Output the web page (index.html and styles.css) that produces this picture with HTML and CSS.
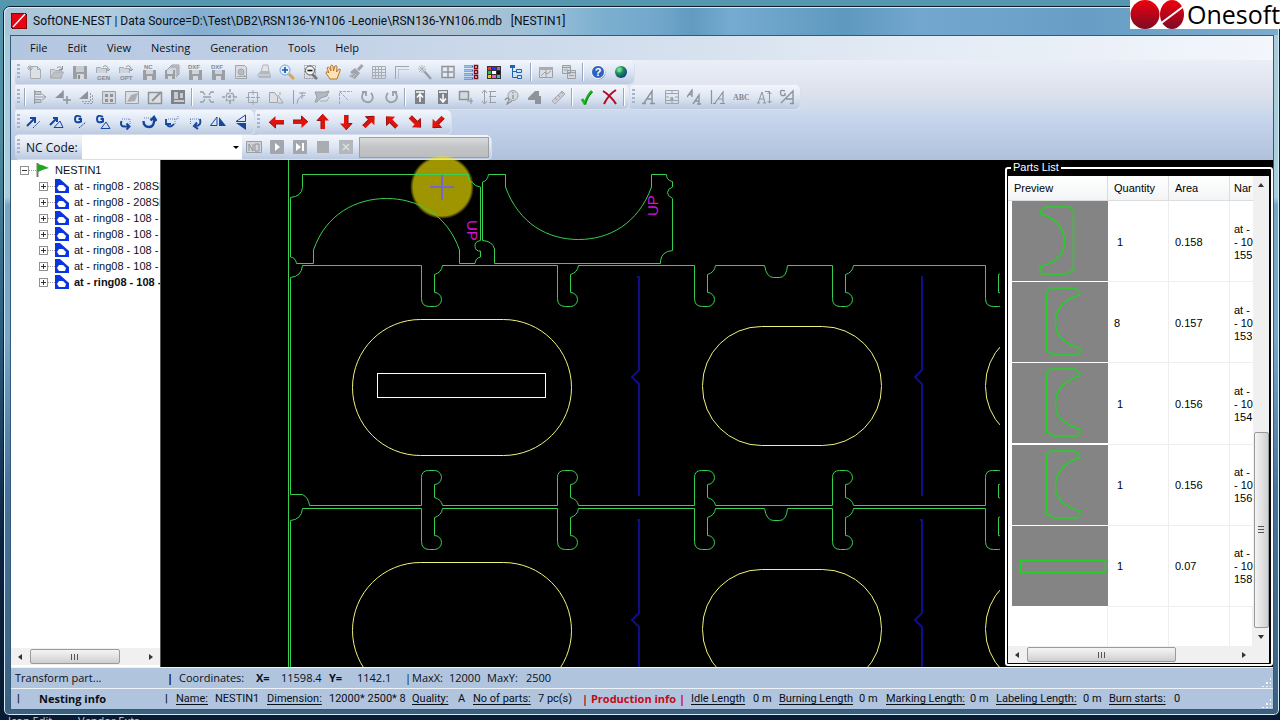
FILE: index.html
```html
<!DOCTYPE html>
<html lang="en">
<head>
<meta charset="utf-8">
<title>SoftONE-NEST</title>
<link rel="stylesheet" href="styles.css">
</head>
<body>
<svg class="defs" width="0" height="0" aria-hidden="true">
  <defs>
    <linearGradient id="red" x1="0" y1="0" x2="0" y2="1"><stop offset="0" stop-color="#f0000c"/><stop offset="1" stop-color="#7d0a26"/></linearGradient>
    <radialGradient id="globe" cx=".35" cy=".3" r=".8"><stop offset="0" stop-color="#7fe0c0"/><stop offset=".45" stop-color="#1b8a58"/><stop offset="1" stop-color="#0c2f86"/></radialGradient>
    <symbol id="new" viewBox="0 0 16 16"><path d="M4.500 2.500h7l3 3v9h-10z" fill="#dde0e4" stroke="#a9adb3"/><path d="M11.500 2.500v3h3M1 4h6M4 1v6M2 2l4 4M6 2L2 6" fill="none" stroke="#a9adb3"/></symbol>
    <symbol id="open" viewBox="0 0 16 16"><path d="M1.500 14V5.500h4l1 1h6V14z" fill="#d0d3d8" stroke="#a9adb3"/><path d="M1.500 14l4-6h9l-3 6z" fill="#bfc3c8" stroke="#a9adb3"/><path d="M8 4q3-3 5 1M13.500 2v3.500H10" fill="none" stroke="#8f949b"/></symbol>
    <symbol id="save" viewBox="0 0 16 16"><path d="M1 2h14v13H1z" fill="#9a9fa6"/><path d="M4 2h8v6H4z" fill="#c9ccd1"/><path d="M5 10h7v5H5z" fill="#d6d9dd"/><path d="M6 11h2v4H6z" fill="#8a8f96"/></symbol>
    <symbol id="gen" viewBox="0 0 16 16"><path d="M1.500 9V3.500h4l1 1h5V9" fill="#d0d3d8" stroke="#a9adb3"/><path d="M8 3q3-3 5 1v3M11 5l2 2 2-2" fill="none" stroke="#8f949b"/><text x="2" y="15.500" class="mini">GEN</text></symbol>
    <symbol id="opt" viewBox="0 0 16 16"><path d="M1.500 9V3.500h4l1 1h5V9" fill="#d0d3d8" stroke="#a9adb3"/><path d="M8 3q3-3 5 1v3M11 5l2 2 2-2" fill="none" stroke="#8f949b"/><text x="2" y="15.500" class="mini">OPT</text></symbol>
    <symbol id="nc" viewBox="0 0 16 16"><text x="3" y="5" class="mini">NC</text><path d="M2 6h13v10H2z" fill="#9a9fa6"/><path d="M5 6h7v4H5z" fill="#d0d3d8"/><path d="M6 12h5v4H6z" fill="#d6d9dd"/></symbol>
    <symbol id="stack" viewBox="0 0 16 16"><path d="M5 4l3-3h7v9l-3 3" fill="#c9ccd1" stroke="#9a9fa6"/><path d="M3 6l3-3h7v8" fill="#d0d3d8" stroke="#9a9fa6"/><path d="M1 6h10v9H1z" fill="#9a9fa6"/><path d="M3 6h6v4H3zM4 12h4v3H4z" fill="#d6d9dd"/></symbol>
    <symbol id="dxf" viewBox="0 0 16 16"><text x="1" y="5" class="mini">DXF</text><path d="M2 6h13v10H2z" fill="#9a9fa6"/><path d="M5 6h7v4H5z" fill="#d0d3d8"/><path d="M6 12h5v4H6z" fill="#d6d9dd"/></symbol>
    <symbol id="page" viewBox="0 0 16 16"><path d="M2.500 1.500h9l2 2v11h-11z" fill="#d9dce0" stroke="#a0a5ab"/><circle cx="8" cy="8" r="3" fill="#b9bdc3" stroke="#a0a5ab"/><path d="M10 10l3 3M4 12.500h8" stroke="#a0a5ab"/></symbol>
    <symbol id="print" viewBox="0 0 16 16"><path d="M5 8l2-7h5l1 7z" fill="#e2e4e8" stroke="#b1b5bb"/><path d="M1 11l4-4h8l2 4v3H3z" fill="#b4b8be"/><path d="M2 11h12" stroke="#d9dce0"/></symbol>
    <symbol id="zin" viewBox="0 0 16 16"><path d="M10 10l5 5" stroke="#d9a55a" stroke-width="3"/><circle cx="6" cy="6" r="5" fill="#e5f1ff" stroke="#7ba3d4"/><path d="M3 6h6M6 3v6" stroke="#1155b5" stroke-width="1.600"/></symbol>
    <symbol id="zout" viewBox="0 0 16 16"><path d="M2.500 14.500V1.500H13.500V14.500z" fill="none" stroke="#999" stroke-dasharray="2 1"/><path d="M10 10l5 5" stroke="#777" stroke-width="2.500"/><circle cx="8" cy="6.500" r="4.500" fill="#f4f4f4" stroke="#555"/><path d="M5.500 6.500h5" stroke="#111" stroke-width="1.600"/></symbol>
    <symbol id="hand" viewBox="0 0 16 16"><path d="M5 15L1 9q0-2 2-1l1 1-2-5q1-2 2.500 0L6 7 5.500 2q1.500-2 2.500 0L8.500 7 10 2q2-1 2 1l-.500 5L14 5q2 0 1 2l-3 8z" fill="#fde2b5" stroke="#b9762a"/></symbol>
    <symbol id="brush" viewBox="0 0 16 16"><path d="M14.500 1L10 6" stroke="#a1a5ab" stroke-width="3"/><path d="M7 4l5 5-5 6-6-3 3-2-2-2z" fill="#a1a5ab"/><path d="M3 12l3-3M5 13l3-3" stroke="#c6cad0"/></symbol>
    <symbol id="grid" viewBox="0 0 16 16"><path d="M1.500 2.500h13v12h-13zM4.500 2v12M7.500 2v12M10.500 2v12M1 5.500h13M1 8.500h13M1 11.500h13" fill="none" stroke="#a9adb3"/></symbol>
    <symbol id="ruler" viewBox="0 0 16 16"><path d="M1.500 15V2.500H15" fill="none" stroke="#a0a5ab"/><path d="M4.500 5.500H15M4.500 5.500V15" fill="none" stroke="#a0a5ab" stroke-dasharray="1 1"/></symbol>
    <symbol id="wand" viewBox="0 0 16 16"><path d="M7 7l7 8" stroke="#9a9fa6" stroke-width="2.500"/><path d="M5 1v8M1 5h8M2 2l6 6M8 2L2 8" stroke="#b1b5bb"/></symbol>
    <symbol id="split" viewBox="0 0 16 16"><path d="M2 2.500h12v11H2zM8 3v10M3 8h10" fill="#e7eaee" stroke="#8e939a" stroke-width="1.500"/></symbol>
    <symbol id="list" viewBox="0 0 16 16"><path d="M1 2.500h9M1 6.500h9M1 10.500h9M1 14.500h9" stroke="#2f5fa8" stroke-width="2"/><path d="M1 2.500h8M1 6.500h8M1 10.500h8M1 14.500h8" stroke="#9fc0ea"/><path d="M11.500 1.500h3v3h-3zM11.500 6.500h3v3h-3zM11.500 11.500h3v3h-3z" fill="#fff" stroke="#7a0d18" stroke-width="1.500"/></symbol>
    <symbol id="pal" viewBox="0 0 16 16"><path d="M1 2h14v13H1z" fill="#333"/><path d="M2 3h3v3H2z" fill="#f33"/><path d="M6 3h4v3H6z" fill="#2b2bff"/><path d="M11 3h3v3h-3z" fill="#b44cff"/><path d="M2 7h3v3H2z" fill="#1cc83c"/><path d="M6 7h4v3H6z" fill="#fff"/><path d="M11 7h3v3h-3z" fill="#111"/><path d="M2 11h3v3H2z" fill="#f5c518"/><path d="M6 11h4v3H6z" fill="#ff4fd0"/><path d="M11 11h3v3h-3z" fill="#22c7d6"/></symbol>
    <symbol id="tree" viewBox="0 0 16 16"><path d="M3.500 3v10.500H8M3.500 7.500H7" fill="none" stroke="#1b63b5"/><path d="M1 1h5v3H1z" fill="#1b63b5"/><path d="M7.500 5.500h5v3h-5zM8.500 11.500h4v3h-4z" fill="#cfe3fb" stroke="#1b63b5"/></symbol>
    <symbol id="win" viewBox="0 0 16 16"><path d="M1.500 3.500h13v10h-13z" fill="#dcdfe3" stroke="#9a9fa6"/><path d="M1 3h14v3H1z" fill="#a9adb3"/><path d="M3 12l4-4 2 2 4-3M8 6v7" fill="none" stroke="#9a9fa6"/></symbol>
    <symbol id="wins" viewBox="0 0 16 16"><path d="M1.500 1.500h8v8h-8zM6.500 6.500h8v8h-8z" fill="#d5d8dd" stroke="#9a9fa6"/><path d="M2 3.500h7M3 6h4M7 8.500h7M8 11.500h5" stroke="#9a9fa6"/></symbol>
    <symbol id="help" viewBox="0 0 16 16"><circle cx="9" cy="9" r="6.500" fill="#8ea6cf"/><circle cx="8" cy="8" r="6.500" fill="#2c62c0" stroke="#fff"/><text x="8" y="12" class="q">?</text></symbol>
    <symbol id="world" viewBox="0 0 16 16"><circle cx="8" cy="8" r="6" fill="url(#globe)"/><path d="M4 5q3-3 5 0l-2 3-2 0z" fill="#6edb8f"/></symbol>
    <symbol id="al" viewBox="0 0 16 16"><path d="M2.500 1v14" stroke="#9a9fa6"/><path d="M3 2.500h6v3H3zM3 10.500h6v3H3z" fill="#c5c9ce" stroke="#9a9fa6"/><path d="M3 8h10M10 5l4 3-4 3" fill="none" stroke="#9a9fa6"/></symbol>
    <symbol id="triplus" viewBox="0 0 16 16"><path d="M0 9l8-7v7z" fill="#8e939a"/><path d="M8 9.500v-8M12 7v8M8 11h8" stroke="#8e939a" stroke-width="1.500"/></symbol>
    <symbol id="tricopy" viewBox="0 0 16 16"><path d="M1 10l9-8v8z" fill="#8e939a"/><path d="M12.500 4v8.500H4M14.500 6v8.500H6" fill="none" stroke="#9a9fa6" stroke-dasharray="2 1"/></symbol>
    <symbol id="cells" viewBox="0 0 16 16"><path d="M1.500 2.500h13v12h-13z" fill="#d5d8dd" stroke="#9a9fa6"/><path d="M4 5h3v3H4zM9 5h3v3H9zM4 10h3v3H4zM9 10h3v3H9z" fill="#8e939a"/></symbol>
    <symbol id="fold" viewBox="0 0 16 16"><path d="M1.500 14.500v-12h13v12z" fill="#dcdfe3" stroke="#9a9fa6"/><path d="M3 13l4-7 7-2-3 8z" fill="#a9adb3"/></symbol>
    <symbol id="edit" viewBox="0 0 16 16"><path d="M1.500 3.500h13v11h-13z" fill="#dcdfe3" stroke="#8e939a" stroke-width="1.500"/><path d="M5 12l9-9" stroke="#8e939a" stroke-width="2"/></symbol>
    <symbol id="nest" viewBox="0 0 16 16"><path d="M1 1h14v14H1z" fill="#7f848b"/><path d="M4 3h4v7H4zM10 4h3v5h-3zM4 11h10v2H4z" fill="#c8ccd1"/></symbol>
    <symbol id="inward" viewBox="0 0 16 16"><path d="M1 3h3l2 3M15 3h-3l-2 3M1 13h3l2-3M15 13h-3l-2-3M4 8h8" fill="none" stroke="#9a9fa6" stroke-width="1.300"/></symbol>
    <symbol id="center" viewBox="0 0 16 16"><path d="M4.500 4.500h7v7h-7zM8 0v4M8 12v4M0 8h4M12 8h4M6 8h4M8 6v4" fill="none" stroke="#9a9fa6" stroke-width="1.500" stroke-dasharray="3 1"/></symbol>
    <symbol id="focus" viewBox="0 0 16 16"><path d="M3.500 3.500h9v10h-9zM8 1v5M8 11v5M1 8.500h4M11 8.500h4M6 8.500h4" fill="none" stroke="#a0a5ab"/></symbol>
    <symbol id="mirror" viewBox="0 0 16 16"><path d="M1.500 13.500v-10h5l3 4v6zM10 6l5 8h-5M12 3v3" fill="#dcdfe3" stroke="#a0a5ab"/></symbol>
    <symbol id="corner" viewBox="0 0 16 16"><path d="M2.500 1v14M6 14.500q1-8 8-8M11 3v7M8 4h7" fill="none" stroke="#9a9fa6"/></symbol>
    <symbol id="shape" viewBox="0 0 16 16"><path d="M1 3h10l4-1-2 5-6 2-4 4H1l2-5z" fill="#b4b8be" stroke="#9a9fa6"/><path d="M6 12h7l2-4" fill="none" stroke="#a9adb3"/></symbol>
    <symbol id="angle" viewBox="0 0 16 16"><path d="M2.500 15V2.500H15M3 3l8 8" fill="none" stroke="#a5a9af" stroke-dasharray="3 1"/></symbol>
    <symbol id="ccw" viewBox="0 0 16 16"><path d="M4 3q-4 5 0 9 5 3 8-1 2-4-1-7M2 3h4v4" fill="none" stroke="#9a9fa6" stroke-width="1.800"/></symbol>
    <symbol id="cw" viewBox="0 0 16 16"><path d="M12 3q4 5 0 9-5 3-8-1-2-4 1-7M14 3h-4v4" fill="none" stroke="#9a9fa6" stroke-width="1.800"/></symbol>
    <symbol id="up" viewBox="0 0 16 16"><path d="M3 1h10v14H3z" fill="#7d828a"/><path d="M8 13V6M5 8.500L8 5l3 3.500M4 3h8" fill="none" stroke="#fff" stroke-width="1.500"/></symbol>
    <symbol id="down" viewBox="0 0 16 16"><path d="M3 1h10v14H3z" fill="#7d828a"/><path d="M8 5v7M5 9.500L8 13l3-3.500M4 3h8" fill="none" stroke="#fff" stroke-width="1.500"/></symbol>
    <symbol id="moveto" viewBox="0 0 16 16"><path d="M1.500 2.500h9v8h-9z" fill="#d5d8dd" stroke="#8e939a" stroke-width="1.500"/><path d="M9 12h6M13 9v6" stroke="#8e939a"/></symbol>
    <symbol id="dist" viewBox="0 0 16 16"><path d="M3.500 1v14M1 4l2.500-3L6 4M1 12l2.500 3L6 12M8 2.500h7M8 7.500h7M8 13.500h7M9.500 3v10" fill="none" stroke="#9a9fa6"/></symbol>
    <symbol id="info" viewBox="0 0 16 16"><circle cx="9" cy="6.500" r="5" fill="#d5d8dd" stroke="#9a9fa6"/><path d="M9 6v4M9 3v1.500M1 11q3-4 4 0l-2 4 5-3" fill="none" stroke="#8e939a" stroke-width="1.300"/></symbol>
    <symbol id="part" viewBox="0 0 16 16"><path d="M1 9l7-7h4v5h2v8H8v-4H1z" fill="#8e939a"/></symbol>
    <symbol id="meas" viewBox="0 0 16 16"><path d="M2 12L12 2l3 3L5 15z" fill="#c9ccd1" stroke="#a9adb3"/><path d="M5 9l2 2M8 6l2 2M11 3l2 2" stroke="#a0a5ab"/></symbol>
    <symbol id="ok" viewBox="0 0 16 16"><path d="M3 10l3 5Q8 7 13 2" fill="none" stroke="#22b422" stroke-width="2.800"/><path d="M6 15Q8 8 13.500 3" fill="none" stroke="#0c7d14"/></symbol>
    <symbol id="no" viewBox="0 0 16 16"><path d="M1 2q8 5 13 13M14 1Q7 5 2 15" fill="none" stroke="#b00a1e" stroke-width="2"/></symbol>
    <symbol id="ta" viewBox="0 0 16 16"><path d="M1 14.500h4M9 14.500h5M3 14L11 2v12M6 10h5" fill="none" stroke="#8e939a" stroke-width="1.400"/></symbol>
    <symbol id="tb" viewBox="0 0 16 16"><path d="M1.500 1.500h13v13h-13zM1 4.500h14M1 11.500h14M8 1v3M8 12v3M2 8h3M11 8h3" fill="none" stroke="#a0a5ab"/><text x="6" y="10.500" class="mini">a</text></symbol>
    <symbol id="tc" viewBox="0 0 16 16"><path d="M0 8l5-7v7M2 5.500h3M6 15l6-9v9M8 12h4M10 15h4" fill="none" stroke="#8e939a" stroke-width="1.400"/></symbol>
    <symbol id="td" viewBox="0 0 16 16"><path d="M1.500 1v14M3 14.500h3M10 14.500h5M5 14l8-11v11M8 10h5" fill="none" stroke="#8e939a" stroke-width="1.200"/></symbol>
    <symbol id="te" viewBox="0 0 16 16"><text x="0" y="11" class="abc">ABC</text></symbol>
    <symbol id="tf" viewBox="0 0 16 16"><path d="M1 14h3M7 14h3M2 14L6 3l3 11M4 10h4M9 2.500h5M13.500 3v11M11.500 5l2-2 2 2M11.500 12l2 2 2-2" fill="none" stroke="#8e939a"/></symbol>
    <symbol id="tg" viewBox="0 0 16 16"><path d="M6 2Q1 0 1.500 4T6 6V4M2 14L14 2v12M7 10h7M11 14.500h4" fill="none" stroke="#8e939a" stroke-width="1.400"/></symbol>
    <symbol id="b1" viewBox="0 0 16 16"><path d="M1 12L8 5M4 4h5v5" fill="none" stroke="#17479c" stroke-width="2"/><path d="M7 14l7-7" stroke="#17479c" stroke-dasharray="2 1"/></symbol>
    <symbol id="b2" viewBox="0 0 16 16"><path d="M1 11L7 5M4 4h4v4" fill="none" stroke="#17479c" stroke-width="2"/><path d="M5 13.500h9L11 7z" fill="none" stroke="#17479c"/></symbol>
    <symbol id="b3" viewBox="0 0 16 16"><path d="M9 3Q3 0 3 5t6 2.500V5H6.500" fill="none" stroke="#17479c" stroke-width="2"/><path d="M7 14l7-6" stroke="#17479c" stroke-dasharray="2 1"/></symbol>
    <symbol id="b4" viewBox="0 0 16 16"><path d="M8 3Q2 0 2 5t6 2.500V5H5.500" fill="none" stroke="#17479c" stroke-width="2"/><path d="M6 14.500h9L11 8z" fill="none" stroke="#17479c"/></symbol>
    <symbol id="b5" viewBox="0 0 16 16"><path d="M3.500 7q-2 6 4 5.500h3M8.500 9.500l3 3-3 3" fill="none" stroke="#17479c" stroke-width="2"/><path d="M4 5h8v5" fill="none" stroke="#5b82c4" stroke-dasharray="1 1"/></symbol>
    <symbol id="b6" viewBox="0 0 16 16"><path d="M2.500 7q0 6 5.500 6t5-8M9.500 6.500L13 3l2.500 4" fill="none" stroke="#17479c" stroke-width="2.400"/><path d="M3 4h7" stroke="#5b82c4" stroke-dasharray="1 1"/></symbol>
    <symbol id="b7" viewBox="0 0 16 16"><path d="M2 5v5h5M2 10q4 5 8 0" fill="none" stroke="#17479c" stroke-width="1.800"/><path d="M4 5h10v-3M11 5v6" fill="none" stroke="#5b82c4" stroke-dasharray="1 1"/></symbol>
    <symbol id="b8" viewBox="0 0 16 16"><path d="M13 5q2 7-5 7M10 8.500L7 12l4 3" fill="none" stroke="#17479c" stroke-width="2"/><path d="M3 5h9M3.500 5v6" fill="none" stroke="#5b82c4" stroke-dasharray="1 1"/></symbol>
    <symbol id="b9" viewBox="0 0 16 16"><path d="M.500 11.500L7 3v8.500z" fill="none" stroke="#17479c"/><path d="M9 3l7 9H9z" fill="#17479c"/></symbol>
    <symbol id="b10" viewBox="0 0 16 16"><path d="M3 7.500L12.500 1v6.500z" fill="none" stroke="#17479c"/><path d="M3 9h10v7z" fill="#17479c"/></symbol>
    <symbol id="arr" viewBox="0 0 16 16"><path d="M0 8l6.500-6v4H15v4H6.500v4z" fill="#e0140c"/><path d="M6.500 10v4L0 8M6.500 10H15" fill="none" stroke="#96100e"/></symbol>
    <symbol id="ncb" viewBox="0 0 16 16"><path d="M.500 2.500h15v11H.500z" fill="#d0d3d8" stroke="#9a9fa6"/><path d="M3 12V5l4 7V5M9 5h4v7H9z" fill="none" stroke="#8e939a"/></symbol>
    <symbol id="play" viewBox="0 0 16 16"><rect x="1" y="1" width="14" height="14" rx="1" fill="#a3a7ad"/><path d="M6 4l5 4-5 4z" fill="#fff"/></symbol>
    <symbol id="step" viewBox="0 0 16 16"><rect x="1" y="1" width="14" height="14" rx="1" fill="#a3a7ad"/><path d="M4 4l5 4-5 4zM10 4h2v8h-2z" fill="#fff"/></symbol>
    <symbol id="stop" viewBox="0 0 16 16"><rect x="2" y="2" width="12" height="12" fill="#a9acb1"/></symbol>
    <symbol id="cancel" viewBox="0 0 16 16"><rect x="1" y="1" width="14" height="14" fill="#b4b7bc"/><path d="M5 5l6 6M11 5l-6 6" stroke="#dcdfe2" stroke-width="1.500"/></symbol>
    <symbol id="item" viewBox="0 0 14 14"><path d="M0 0h5l9 8v6H0z" fill="#0a35e0"/><path d="M4 6h4l3 3-1 3H4L2 9z" fill="#fff"/></symbol>
    <symbol id="flag" viewBox="0 0 14 14"><path d="M1.500 0v14" stroke="#777" stroke-width="2"/><path d="M2 1q5 1 11 4-5 1-11 4z" fill="#22a322"/></symbol>
    <symbol id="cshape" viewBox="0 0 96 80"><path d="M34.500 69V10l4-4h24l5 4v3l-6 2Q44 23 43.500 40T62 64l6 2v4l-3 3H42z" fill="none" stroke="#25cf25" stroke-width="1.500"/></symbol>
    <path id="slot" d="M0 0v33q0 8 8 8h5a7 7 0 0 0 0-14V9q7-2 8-9"/>
    <path id="slotup" d="M0 0v-28q0-7 7-7h6a7 7 0 0 1 0 14v13q7 2 8 8"/>
  </defs>
</svg>

<div class="window">
  <header class="title">
    <svg class="appicon" viewBox="0 0 16 16" aria-hidden="true"><path d="M0 0h14l2 2v14H2L0 14z" fill="#e30613" stroke="#300"/><path d="M2 14L14 1" stroke="#fff" stroke-width="1.300"/></svg>
    <h1 class="caption">SoftONE-NEST | Data Source=D:\Test\DB2\RSN136-YN106 -Leonie\RSN136-YN106.mdb &nbsp; [NESTIN1]</h1>
  </header>
  <div class="client">
    <nav class="menu">
      <button>File</button><button>Edit</button><button>View</button><button>Nesting</button><button>Generation</button><button>Tools</button><button>Help</button>
    </nav>
    <div class="bars">
      <div class="barrow">
        <div class="bar"><i class="grip"></i>
          <button aria-label="New"><svg><use href="#new"/></svg></button><button aria-label="Open"><svg><use href="#open"/></svg></button><button aria-label="Save"><svg><use href="#save"/></svg></button><button aria-label="Open generated"><svg><use href="#gen"/></svg></button><button aria-label="Open optimised"><svg><use href="#opt"/></svg></button><button aria-label="Save NC"><svg><use href="#nc"/></svg></button><button aria-label="Save all"><svg><use href="#stack"/></svg></button><button aria-label="Export DXF"><svg><use href="#dxf"/></svg></button><button aria-label="Import DXF"><svg><use href="#dxf"/></svg></button><button aria-label="Preview"><svg><use href="#page"/></svg></button><button aria-label="Print"><svg><use href="#print"/></svg></button><button aria-label="Zoom in"><svg><use href="#zin"/></svg></button><button aria-label="Zoom window"><svg><use href="#zout"/></svg></button><button aria-label="Pan"><svg><use href="#hand"/></svg></button><button aria-label="Redraw"><svg><use href="#brush"/></svg></button><button aria-label="Grid"><svg><use href="#grid"/></svg></button><button aria-label="Rulers"><svg><use href="#ruler"/></svg></button><button aria-label="Wizard"><svg><use href="#wand"/></svg></button><button aria-label="Split"><svg><use href="#split"/></svg></button><button aria-label="Parts"><svg><use href="#list"/></svg></button><button aria-label="Colours"><svg><use href="#pal"/></svg></button><button aria-label="Tree"><svg><use href="#tree"/></svg></button><i class="sep"></i><button aria-label="Window"><svg><use href="#win"/></svg></button><button aria-label="Windows"><svg><use href="#wins"/></svg></button><i class="sep"></i><button aria-label="Help topics"><svg><use href="#help"/></svg></button><button aria-label="Web"><svg><use href="#world"/></svg></button>
        </div>
      </div>
      <div class="barrow">
        <div class="bar"><i class="grip"></i><i class="sep"></i>
          <button aria-label="Align"><svg><use href="#al"/></svg></button><button aria-label="Add part"><svg><use href="#triplus"/></svg></button><button aria-label="Copy part"><svg><use href="#tricopy"/></svg></button><button aria-label="Array"><svg><use href="#cells"/></svg></button><button aria-label="Open part"><svg><use href="#fold"/></svg></button><button aria-label="Edit part"><svg><use href="#edit"/></svg></button><button aria-label="Nest"><svg><use href="#nest"/></svg></button><i class="sep"></i><button aria-label="Shrink"><svg><use href="#inward"/></svg></button><button aria-label="Centre"><svg><use href="#center"/></svg></button><button aria-label="Origin"><svg><use href="#focus"/></svg></button><button aria-label="Mirror"><svg><use href="#mirror"/></svg></button><button aria-label="Corner"><svg><use href="#corner"/></svg></button><button aria-label="Shape"><svg><use href="#shape"/></svg></button><button aria-label="Angle"><svg><use href="#angle"/></svg></button><button aria-label="Turn left"><svg><use href="#ccw"/></svg></button><button aria-label="Turn right"><svg><use href="#cw"/></svg></button><i class="sep"></i><button aria-label="Bring up"><svg><use href="#up"/></svg></button><button aria-label="Send down"><svg><use href="#down"/></svg></button><button aria-label="Move to"><svg><use href="#moveto"/></svg></button><button aria-label="Distance"><svg><use href="#dist"/></svg></button><button aria-label="Info"><svg><use href="#info"/></svg></button><button aria-label="Part"><svg><use href="#part"/></svg></button><button aria-label="Measure"><svg><use href="#meas"/></svg></button><i class="sep"></i><button aria-label="Accept"><svg><use href="#ok"/></svg></button><button aria-label="Reject"><svg><use href="#no"/></svg></button><i class="sep"></i>
        </div>
        <div class="bar"><i class="grip"></i>
          <button aria-label="Text"><svg><use href="#ta"/></svg></button><button aria-label="Text box"><svg><use href="#tb"/></svg></button><button aria-label="Copy text"><svg><use href="#tc"/></svg></button><button aria-label="Align text"><svg><use href="#td"/></svg></button><button aria-label="Edit text"><svg><use href="#te"/></svg></button><button aria-label="Text height"><svg><use href="#tf"/></svg></button><button aria-label="Rotate text"><svg><use href="#tg"/></svg></button>
        </div>
      </div>
      <div class="barrow">
        <div class="bar"><i class="grip"></i>
          <button aria-label="Move"><svg><use href="#b1"/></svg></button><button aria-label="Move part"><svg><use href="#b2"/></svg></button><button aria-label="Rotate"><svg><use href="#b3"/></svg></button><button aria-label="Rotate part"><svg><use href="#b4"/></svg></button><button aria-label="Rotate 90"><svg><use href="#b5"/></svg></button><button aria-label="Rotate 180"><svg><use href="#b6"/></svg></button><button aria-label="Rotate by angle"><svg><use href="#b7"/></svg></button><button aria-label="Rotate back"><svg><use href="#b8"/></svg></button><button aria-label="Flip horizontal"><svg><use href="#b9"/></svg></button><button aria-label="Flip vertical"><svg><use href="#b10"/></svg></button>
        </div>
        <div class="bar arrows"><i class="grip"></i>
          <button aria-label="Left"><svg><use href="#arr"/></svg></button><button aria-label="Right"><svg class="r180"><use href="#arr"/></svg></button><button aria-label="Up"><svg class="r90"><use href="#arr"/></svg></button><button aria-label="Down"><svg class="r270"><use href="#arr"/></svg></button><button aria-label="Up right"><svg class="r135"><use href="#arr"/></svg></button><button aria-label="Up left"><svg class="r45"><use href="#arr"/></svg></button><button aria-label="Down right"><svg class="r225"><use href="#arr"/></svg></button><button aria-label="Down left"><svg class="r315"><use href="#arr"/></svg></button>
        </div>
      </div>
      <div class="barrow">
        <div class="bar"><i class="grip"></i>
          <label class="nclabel" for="nccode">NC Code:</label>
          <span class="combo"><select id="nccode" class="ncselect"><option></option></select></span>
          <button aria-label="NC"><svg><use href="#ncb"/></svg></button><button aria-label="Play"><svg><use href="#play"/></svg></button><button aria-label="Step"><svg><use href="#step"/></svg></button><button aria-label="Stop"><svg><use href="#stop"/></svg></button><button aria-label="Cancel"><svg><use href="#cancel"/></svg></button>
          <span class="progress" role="progressbar" aria-label="Simulation"></span>
        </div>
      </div>
    </div>

    <main class="work">
      <aside class="side">
        <ul class="tree">
          <li class="root"><i class="exp minus"></i><i class="dots"></i><svg><use href="#flag"/></svg><span>NESTIN1</span></li>
          <li><i class="exp"></i><i class="dots"></i><svg><use href="#item"/></svg><span>at - ring08 - 208SE</span></li>
          <li><i class="exp"></i><i class="dots"></i><svg><use href="#item"/></svg><span>at - ring08 - 208SE</span></li>
          <li><i class="exp"></i><i class="dots"></i><svg><use href="#item"/></svg><span>at - ring08 - 108 -</span></li>
          <li><i class="exp"></i><i class="dots"></i><svg><use href="#item"/></svg><span>at - ring08 - 108 -</span></li>
          <li><i class="exp"></i><i class="dots"></i><svg><use href="#item"/></svg><span>at - ring08 - 108 -</span></li>
          <li><i class="exp"></i><i class="dots"></i><svg><use href="#item"/></svg><span>at - ring08 - 108 -</span></li>
          <li class="current"><i class="exp"></i><i class="dots"></i><svg><use href="#item"/></svg><span>at - ring08 - 108 -</span></li>
        </ul>
        <div class="hscroll"><i class="tri left"></i><span class="thumb"></span><i class="tri right"></i></div>
      </aside>

      <section class="canvas" aria-label="Nesting drawing">
        <i class="spot"></i>
        <svg class="drawing" viewBox="161 160 839 507">
          <g class="green">
            <path d="M288.500 160V668"/>
            <path d="M302.500 174.500H468.500V178q0 4 4 4.500 2 4 8 4.500V240.500q-6 1-5.500 6t5.500 4.500V257q-5 1-5.500 6.500H459.500V250C447 214 417 198.500 386.500 198.500S326 214 313.500 250V263.500H296.500q-1-6-6-6.500V197.500q11-1 12-10z"/>
            <path d="M488.500 174.500H505.500V187C519 224 548 239.500 578.500 239.500S638 224 651.500 187V174.500H666.500q0 6 6 7V187q-5 2-5 5.500t5 6V250.500q-11 1-12 10.500v2.500H494.500V249q-2-8-12-8.500V182q5-1 6-7.500z"/>
            <path d="M421.500 265.500H302.500q-1 11-12 12V494.500H302.500q6 3 7 11H421.500M442.500 265.500H557.500M578.500 265.500H694.500M715.500 265.500H764.500q2 12 9 12h6q7 0 8-12H832.500M853.500 265.500H985.500M442.500 505.500H557.500M578.500 505.500H694.500M715.500 505.500H832.500M853.500 505.500H985.500"/>
            <path d="M421.500 508.500H302.500q-1 11-12 12V668M442.500 508.500H557.500M578.500 508.500H694.500M715.500 508.500H764.500q2 12 9 12h6q7 0 8-12H832.500M853.500 508.500H985.500"/>
            <use href="#slot" x="421.500" y="265.500"/><use href="#slot" x="557.500" y="265.500"/><use href="#slot" x="694.500" y="265.500"/><use href="#slot" x="832.500" y="265.500"/><use href="#slot" x="985.500" y="265.500"/>
            <use href="#slotup" x="421.500" y="505.500"/><use href="#slotup" x="557.500" y="505.500"/><use href="#slotup" x="694.500" y="505.500"/><use href="#slotup" x="832.500" y="505.500"/><use href="#slotup" x="985.500" y="505.500"/>
            <use href="#slot" x="421.500" y="508.500"/><use href="#slot" x="557.500" y="508.500"/><use href="#slot" x="694.500" y="508.500"/><use href="#slot" x="832.500" y="508.500"/><use href="#slot" x="985.500" y="508.500"/>
          </g>
          <g class="yellow">
            <rect x="352.500" y="319.500" width="219" height="136" rx="68"/>
            <rect x="352.500" y="562.500" width="219" height="136" rx="68"/>
            <rect x="702.500" y="326.500" width="179" height="119" rx="59"/>
            <rect x="702.500" y="569.500" width="179" height="119" rx="59"/>
            <rect x="985.500" y="326.500" width="179" height="119" rx="59"/>
            <rect x="985.500" y="569.500" width="179" height="119" rx="59"/>
          </g>
          <rect class="white" x="377.500" y="373.500" width="168" height="24"/>
          <g class="blue">
            <path d="M637 277h2V370l-7 7 7 7V495h-1M637 520h2V613l-7 7 7 7V668M921 277h1V370l-7 7 7 7V495h-1M920 520h2V613l-7 7 7 7V668"/>
          </g>
          <text class="up" transform="translate(467 220) rotate(90)">UP</text>
          <text class="up" transform="translate(658 216) rotate(-90)">UP</text>
          <path class="cross" d="M442 175V200M430 187H454"/>
        </svg>
      </section>

      <section class="parts">
        <fieldset class="group">
          <legend>Parts List</legend>
          <div class="listbox">
            <div class="rows">
              <table>
                <thead><tr><th class="c1">Preview</th><th class="c2">Quantity</th><th class="c2">Area</th><th>Nar</th></tr></thead>
                <tbody>
                  <tr><td><svg class="flip"><use href="#cshape"/></svg></td><td class="qty">1</td><td>0.158</td><td class="name">at -<br>- 10<br>155</td></tr>
                  <tr><td><svg><use href="#cshape"/></svg></td><td>8</td><td>0.157</td><td class="name">at -<br>- 10<br>153</td></tr>
                  <tr><td><svg><use href="#cshape"/></svg></td><td class="qty">1</td><td>0.156</td><td class="name">at -<br>- 10<br>154</td></tr>
                  <tr><td><svg><use href="#cshape"/></svg></td><td class="qty">1</td><td>0.156</td><td class="name">at -<br>- 10<br>156</td></tr>
                  <tr><td><svg viewBox="0 0 96 80"><rect x="8.500" y="34.500" width="85" height="12" fill="none" stroke="#25cf25" stroke-width="1.500"/></svg></td><td class="qty">1</td><td>0.07</td><td class="name">at -<br>- 10<br>158</td></tr>
                  <tr class="filler"><td></td><td></td><td></td><td></td></tr>
                </tbody>
              </table>
            </div>
            <div class="vscroll"><i class="tri top"></i><span class="vthumb"></span><i class="tri bottom"></i></div>
            <div class="hscroll wide"><i class="tri left"></i><span class="thumb"></span><i class="tri right"></i></div>
            <div class="scrollcorner"></div>
          </div>
        </fieldset>
      </section>
    </main>

    <footer>
      <div class="status coords">
        <span>Transform part...</span><b>|</b><span>Coordinates:</span><b>X=</b><span>11598.4</span><b>Y=</b><span>1142.1</span><span>|</span><span>MaxX:</span><span>12000</span><span>MaxY:</span><span>2500</span><i class="sizer"></i>
      </div>
      <div class="status info">
        <b>|</b><b class="head">Nesting info</b><b>|</b><u>Name:</u><span>NESTIN1</span><u>Dimension:</u><span>12000* 2500* 8</span><u>Quality:</u><span>A</span><u>No of parts:</u><span>7 pc(s)</span><b class="head prod">| Production info |</b><u>Idle Length</u><span>0 m</span><u>Burning Length</u><span>0 m</span><u>Marking Length:</u><span>0 m</span><u>Labeling Length:</u><span>0 m</span><u>Burn starts:</u><span>0</span><i class="sizer"></i>
      </div>
    </footer>
  </div>
</div>
<div class="desktop"><span>Icon Edit</span><span>Vendor Exts</span></div>
<div class="brand">
  <svg viewBox="0 0 56 29" aria-hidden="true"><ellipse cx="15" cy="14.500" rx="14.500" ry="14.500" fill="url(#red)"/><ellipse cx="42" cy="14.500" rx="12" ry="14.500" fill="url(#red)"/><path d="M30 24L54 6" stroke="#fff" stroke-width="2"/></svg>
  <span>Onesoft</span>
</div>
</body>
</html>
```
FILE: styles.css
```css
* { box-sizing: border-box; }
body {
  margin: 0;
  height: 100vh;
  display: flex;
  flex-direction: column;
  overflow: hidden;
  position: relative;
  font-family: "Open Sans", "Noto Sans", sans-serif;
  font-size: 11px;
  color: #0b0f18;
  background: linear-gradient(#5597ae 0, #4d8a9c 20%, #2c5d80 45%, #0c2340 75%, #081a33 100%);
}
button, select { font: inherit; color: inherit; border: 0; background: none; padding: 0; }
.defs { position: absolute; }
.mini { font: bold 6px "Liberation Sans", sans-serif; fill: #858a91; }
.abc { font: bold 8px "Liberation Serif", serif; fill: #858a91; }
.q { font: bold 11px "Liberation Sans", sans-serif; fill: #fff; text-anchor: middle; }

.window {
  flex: 1;
  min-height: 0;
  margin: 6px 0 0 3px;
  border: 1px solid #0c1c28;
  border-radius: 7px 7px 6px 6px;
  padding: 0 5px 5px 6px;
  display: flex;
  flex-direction: column;
  background: linear-gradient(#a9cbdc 0, #a9cfdf 190px, #78a7c4 198px, #79a8cb 330px, #49739b 480px, #3c6080 100%);
  box-shadow: inset 0 0 0 1px #d4ecf5;
}
.title {
  height: 28px;
  margin: 0 -5px 0 -6px;
  padding: 0 6px 1px;
  display: flex;
  align-items: center;
  gap: 6px;
  border: 1px solid #d4ecf5;
  border-bottom: 0;
  border-radius: 6px 6px 0 0;
  background: linear-gradient(90deg, #a8c4d6 0, #b3cde0 8%, #85aed0 15%, #a3c2dc 25%, #b1c3d2 34%, #9cc0d8 42%, #7cafcf 47%, #73a8cc 51%, #629bc0 54%, #76abd0 57%, #5f99bf 66%, #73a7cf 72%, #689ec5 85%, #7baccd 100%);
}
.appicon { width: 16px; height: 16px; }
.caption { margin: 0; font-family: Roboto, "Open Sans", sans-serif; font-size: 12px; font-weight: 400; white-space: nowrap; line-height: 16px; }
.client {
  flex: 1;
  min-height: 0;
  display: flex;
  flex-direction: column;
  border: 1px solid #345a78;
  background: #b0c4de;
}
.menu {
  height: 24px;
  display: flex;
  align-items: center;
  gap: 20px;
  padding: 0 0 2px 19px;
  font-size: 11px;
  background: linear-gradient(90deg, #b3c6e0, #cfdcec 45%, #dfe8f2 65%, #f3f6fc);
}
.bars { background: linear-gradient(#ebeef7, #dbe1ec 35%, #c6d5ec 60%, #afc1db); }
.barrow { height: 25px; display: flex; gap: 1px; padding-left: 4px; }
.bar {
  height: 24px;
  display: flex;
  align-items: center;
  padding-right: 2px;
  border-radius: 3px 5px 5px 3px;
  background: linear-gradient(#f3f6fc, #dde6f3 50%, #bccae0);
  box-shadow: 1px 1px 0 #d5e0ef;
}
.bar button { width: 23px; height: 22px; flex: none; display: grid; place-items: center; }
.bar svg { width: 16px; height: 16px; display: block; }
.grip { width: 3px; height: 16px; margin: 0 2px 0 2px; background: repeating-linear-gradient(#a9b4c6 0 2px, transparent 2px 4px); }
.sep { width: 2px; height: 18px; margin: 0 2px; background: linear-gradient(90deg, #98a6bd 50%, #fff 50%); }
.arrows .grip { margin-right: 5px; }
.r45 { transform: rotate(45deg); }
.r90 { transform: rotate(90deg); }
.r135 { transform: rotate(135deg); }
.r180 { transform: rotate(180deg); }
.r225 { transform: rotate(225deg); }
.r270 { transform: rotate(270deg); }
.r315 { transform: rotate(315deg); }
.nclabel { width: 60px; padding-left: 4px; font-size: 12px; white-space: nowrap; }
.combo { position: relative; width: 160px; height: 24px; }
.combo::after { content: ""; position: absolute; right: 3px; top: 11px; border: 3px solid transparent; border-top-color: #000; border-bottom: 0; }
.ncselect { width: 160px; height: 24px; background: #fff; appearance: none; }
.progress { width: 130px; height: 21px; margin-left: 2px; border: 1px solid #9b9ea2; background: linear-gradient(#d9dadb, #c4c5c6 45%, #bcbdbe); }

.work { flex: 1; min-height: 0; display: flex; background: #000; }
.side {
  width: 150px;
  display: flex;
  flex-direction: column;
  justify-content: space-between;
  padding-bottom: 2px;
  border-right: 1px solid #555;
  background: #fff;
}
.tree { margin: 0; padding: 2px 0 0 0; list-style: none; font-family: "Liberation Sans", Arial, sans-serif; font-size: 11px; }
.tree li { height: 16px; display: flex; align-items: center; padding-left: 28px; overflow: hidden; white-space: nowrap; }
.tree .root { padding-left: 9px; }
.tree svg { width: 14px; height: 14px; flex: none; margin-right: 5px; }
.tree .current { font-weight: 700; }
.exp {
  width: 9px; height: 9px; flex: none; border: 1px solid #919191;
  background: linear-gradient(#333, #333) center / 5px 1px no-repeat, linear-gradient(#333, #333) center / 1px 5px no-repeat, #fff;
}
.minus { background: linear-gradient(#333, #333) center / 5px 1px no-repeat, #fff; }
.dots { width: 7px; flex: none; border-top: 1px dotted #999; }
.hscroll { height: 17px; display: flex; align-items: center; justify-content: space-between; padding: 0 7px; background: #f0f0f0; }
.thumb {
  width: 90px; height: 15px; margin: 0 auto 0 8px; border: 1px solid #9a9a9a; border-radius: 2px;
  background: repeating-linear-gradient(90deg, #555 0 1px, transparent 1px 3px) center / 8px 6px no-repeat, linear-gradient(#f4f4f4, #e3e3e4 50%, #cdced0);
}
.tri { width: 0; height: 0; border: 3px solid transparent; }
.left { border-right: 4px solid #333; border-left: 0; }
.right { border-left: 4px solid #333; border-right: 0; }
.top { border-bottom: 4px solid #333; border-top: 0; }
.bottom { border-top: 4px solid #333; border-bottom: 0; }

.canvas { flex: 1; min-width: 0; position: relative; }
.spot {
  position: absolute; left: 249px; top: -5px; width: 64px; height: 64px; border-radius: 50%;
  background: radial-gradient(circle closest-side, rgba(255, 240, 0, .62) 90%, rgba(255, 240, 0, 0) 100%);
}
.drawing { position: relative; display: block; width: 839px; height: 507px; fill: none; }
.green { stroke: #38cf50; }
.yellow { stroke: #f2f27c; }
.white { stroke: #fff; }
.blue { stroke: #100d8a; stroke-width: 2; }
.up { font: 15px "Liberation Sans", sans-serif; fill: #d312d3; }
.cross { stroke: #7467cf; stroke-width: 2; }

.parts { width: 269px; display: flex; padding: 2px 0 1px 1px; color: #000; font-family: "Liberation Sans", Arial, sans-serif; font-size: 11px; }
.group { flex: 1; min-width: 0; margin: 0; padding: 3px 2px 2px 1px; border: 2px solid #fff; border-radius: 3px; display: flex; }
.group legend { margin-left: 3px; padding: 0 2px; color: #fff; line-height: 11px; }
.listbox { flex: 1; min-width: 0; height: 487px; display: grid; grid-template: 1fr 17px / 1fr 16px; background: #fff; }
.rows { overflow: hidden; min-height: 0; display: flex; }
.rows table { width: 100%; flex: none; border-collapse: separate; border-spacing: 0; table-layout: fixed; }
.rows th { height: 25px; padding: 0 0 0 6px; text-align: left; font-weight: 400; border-right: 1px solid #ddd; border-bottom: 1px solid #ddd; background: linear-gradient(#fff, #f3f4f6); }
.rows th:last-child, .rows .name { padding-left: 4px; border-right: 0; white-space: nowrap; }
.rows td { height: 81px; padding: 2px 0 0 6px; border-right: 1px solid #eee; border-bottom: 1px solid #eee; line-height: 13px; }
.rows td:first-child { padding: 0 0 0 4px; border-right: 0; border-bottom: 1px solid #fff; }
.rows td svg { display: block; width: 96px; height: 80px; background: #848484; }
.rows td .flip { transform: scaleX(-1); }
.rows .qty { padding-left: 9px; }
.rows .filler td { height: 39px; border-bottom: 0; }
.rows .filler td:first-child { border-right: 1px solid #eee; }
.c1 { width: 100px; }
.c2 { width: 61px; }
.vscroll { display: flex; flex-direction: column; align-items: center; justify-content: space-between; padding: 7px 0; background: #f0f0f0; }
.vthumb {
  width: 15px; height: 196px; margin: auto 0 7px; border: 1px solid #9a9a9a; border-radius: 2px;
  background: repeating-linear-gradient(#555 0 1px, transparent 1px 3px) center / 6px 8px no-repeat, linear-gradient(90deg, #f4f4f4, #e3e3e4 50%, #cdced0);
}
.wide .thumb { width: 149px; margin-left: 8px; }
.scrollcorner { background: #f0f0f0; }

.status { height: 21px; display: grid; align-items: center; border-top: 1px solid #eef3fa; padding-bottom: 1px; background: #b0c4de; white-space: nowrap; font-size: 11px; }
.status > * { min-width: 0; }
.coords { padding-left: 4px; grid-template-columns: 152px 12px 77px 25px 48px 28px 48px 7px 37px 38px 39px 1fr 12px; }
.info { padding-left: 6px; font-family: Roboto, "Open Sans", sans-serif; grid-template-columns: 22px 126px 11px 39px 52px 62px 83px 46px 15px 65px 44px 109px 62px 26px 80px 27px 84px 26px 87px 26px 65px 1fr 12px; }
.head { font-family: "Open Sans", sans-serif; }
.status u { text-underline-offset: 2px; }
.prod { color: #c20a17; }
.sizer { width: 10px; height: 10px; align-self: end; background: radial-gradient(circle, #f3f6fb 1px, transparent 1px) 0 0 / 4px 4px; clip-path: polygon(100% 0, 100% 100%, 0 100%); }
.desktop { height: 4px; flex: none; display: flex; gap: 26px; padding-left: 8px; overflow: hidden; color: #c7ced8; font-size: 11px; line-height: 9px; }
.brand { position: absolute; top: 0; right: 0; width: 150px; height: 29px; display: flex; align-items: center; gap: 1px; overflow: hidden; background: #fff; color: #000; font-size: 25px; line-height: 29px; }
.brand svg { width: 56px; height: 29px; flex: none; }
```
